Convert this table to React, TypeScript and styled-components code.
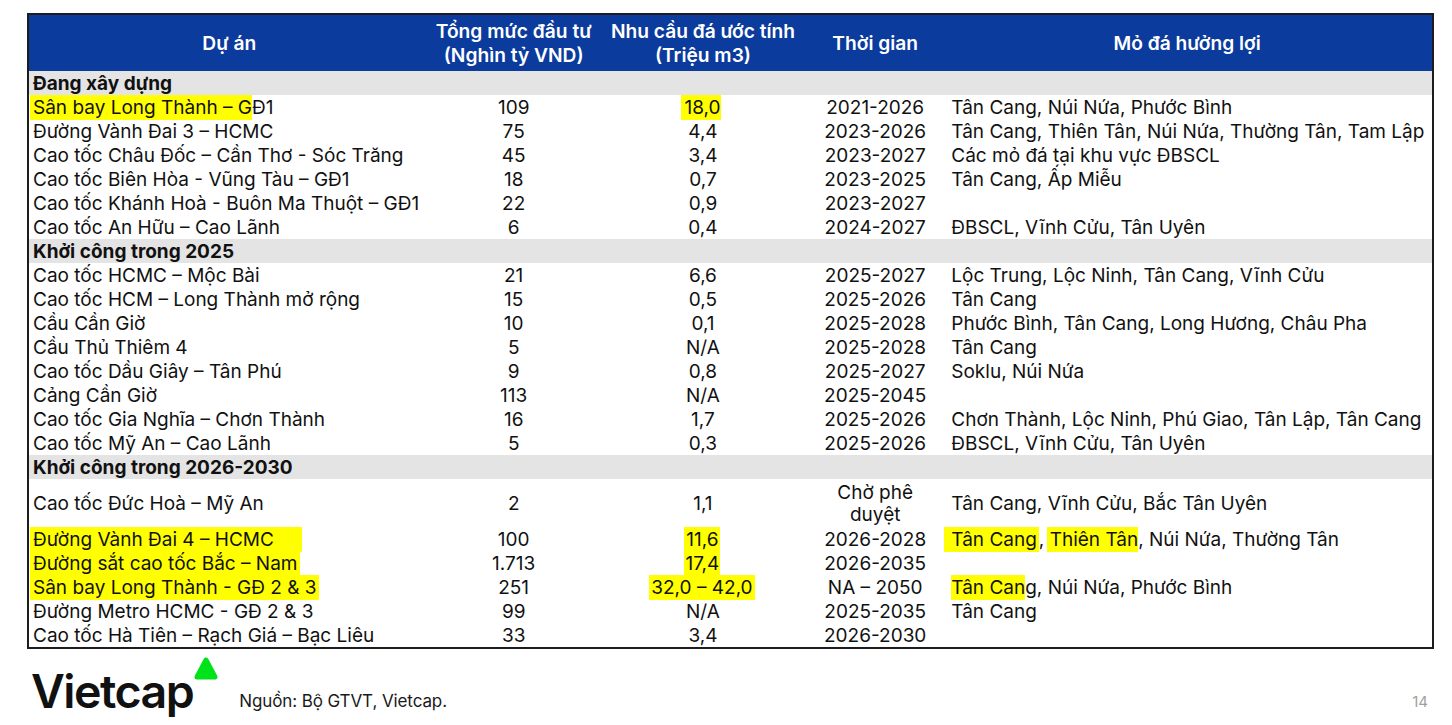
import React from "react";
import styled, {createGlobalStyle} from "styled-components";

const GlobalStyle = createGlobalStyle`
    html, body {
        margin: 0;
        padding: 0;
        background: #ffffff;
    }

    body {
        font-family: Inter, "Noto Sans", "Liberation Sans", sans-serif;
        color: #111111;
        overflow: hidden;
    }
`;

const Page = styled.div`
    width: 1452px;
    height: 725px;
    padding: 13px 0 0 27px;
    box-sizing: border-box;
    display: flex;
    flex-direction: column;
`;

const Table = styled.table`
    width: 1407px;
    table-layout: fixed;
    border-collapse: collapse;
    border: 2px solid #1c1c1c;
    font-size: 19px;
    letter-spacing: 0;
`;

const HeadCell = styled.th`
    height: 56px;
    padding: 0;
    background: #0a3b9d;
    color: #ffffff;
    font-weight: 600;
    font-size: 19.2px;
    line-height: 24px;
    text-align: center;
    vertical-align: middle;
`;

const SectionCell = styled.td`
    height: 22px;
    padding: 2px 0 0 4px;
    background: #e4e4e4;
    font-weight: 700;
    line-height: 22px;
    text-align: left;
`;

const Cell = styled.td<{ $align?: "left" | "center"; $pad?: number }>`
    height: 22px;
    padding: 2px 0 0 ${p => p.$pad ?? 0}px;
    line-height: 22px;
    white-space: nowrap;
    text-align: ${p => p.$align ?? "center"};
    vertical-align: middle;
`;

const Mark = styled.span<{ $extend?: number; $left?: number }>`
    background: #ffff00;
    padding: 1px ${p => p.$extend ?? 0}px 1px ${p => p.$left ?? 0}px;
    margin-left: ${p => -(p.$left ?? 0)}px;
`;

const Footer = styled.div`
    display: flex;
    align-items: flex-end;
    padding: 7px 0 0 4px;
    width: 1407px;
`;

const Logo = styled.div`
    display: flex;
    align-items: flex-start;
`;

const LogoText = styled.span`
    font-family: Inter, "Liberation Sans", sans-serif;
    font-weight: 600;
    font-size: 46.5px;
    letter-spacing: -1.5px;
    line-height: 56px;
    color: #111111;
    margin-top: 7px;
`;

const Source = styled.span`
    font-size: 17px;
    color: #1a1a1a;
    margin: 0 0 8px 20px;
    letter-spacing: -0.1px;
`;

const PageNumber = styled.span`
    margin: 0 0 8px auto;
    font-size: 15px;
    color: #a0a0a0;
    padding-right: 10px;
`;

type Row = {
    name: React.ReactNode;
    invest: string;
    demand: React.ReactNode;
    time: React.ReactNode;
    mines: React.ReactNode;
    tall?: boolean;
};

type Section = { title: string; rows: Row[] };

const sections: Section[] = [
    {
        title: "Đang xây dựng",
        rows: [
            {name: <><Mark $left={3}>Sân bay Long Thành – G</Mark>Đ1</>, invest: "109", demand: <Mark $left={3} $extend={1}>18,0</Mark>, time: "2021-2026", mines: "Tân Cang, Núi Nứa, Phước Bình"},
            {name: "Đường Vành Đai 3 – HCMC", invest: "75", demand: "4,4", time: "2023-2026", mines: "Tân Cang, Thiên Tân, Núi Nứa, Thường Tân, Tam Lập"},
            {name: "Cao tốc Châu Đốc – Cần Thơ - Sóc Trăng", invest: "45", demand: "3,4", time: "2023-2027", mines: "Các mỏ đá tại khu vực ĐBSCL"},
            {name: "Cao tốc Biên Hòa - Vũng Tàu – GĐ1", invest: "18", demand: "0,7", time: "2023-2025", mines: "Tân Cang, Ấp Miễu"},
            {name: "Cao tốc Khánh Hoà - Buôn Ma Thuột – GĐ1", invest: "22", demand: "0,9", time: "2023-2027", mines: ""},
            {name: "Cao tốc An Hữu – Cao Lãnh", invest: "6", demand: "0,4", time: "2024-2027", mines: "ĐBSCL, Vĩnh Cửu, Tân Uyên"},
        ],
    },
    {
        title: "Khởi công trong 2025",
        rows: [
            {name: "Cao tốc HCMC – Mộc Bài", invest: "21", demand: "6,6", time: "2025-2027", mines: "Lộc Trung, Lộc Ninh, Tân Cang, Vĩnh Cửu"},
            {name: "Cao tốc HCM – Long Thành mở rộng", invest: "15", demand: "0,5", time: "2025-2026", mines: "Tân Cang"},
            {name: "Cầu Cần Giờ", invest: "10", demand: "0,1", time: "2025-2028", mines: "Phước Bình, Tân Cang, Long Hương, Châu Pha"},
            {name: "Cầu Thủ Thiêm 4", invest: "5", demand: "N/A", time: "2025-2028", mines: "Tân Cang"},
            {name: "Cao tốc Dầu Giây – Tân Phú", invest: "9", demand: "0,8", time: "2025-2027", mines: "Soklu, Núi Nứa"},
            {name: "Cảng Cần Giờ", invest: "113", demand: "N/A", time: "2025-2045", mines: ""},
            {name: "Cao tốc Gia Nghĩa – Chơn Thành", invest: "16", demand: "1,7", time: "2025-2026", mines: "Chơn Thành, Lộc Ninh, Phú Giao, Tân Lập, Tân Cang"},
            {name: "Cao tốc Mỹ An – Cao Lãnh", invest: "5", demand: "0,3", time: "2025-2026", mines: "ĐBSCL, Vĩnh Cửu, Tân Uyên"},
        ],
    },
    {
        title: "Khởi công trong 2026-2030",
        rows: [
            {name: "Cao tốc Đức Hoà – Mỹ An", invest: "2", demand: "1,1", time: <>Chờ phê<br/>duyệt</>, mines: "Tân Cang, Vĩnh Cửu, Bắc Tân Uyên", tall: true},
            {name: <Mark $left={3} $extend={28}>Đường Vành Đai 4 – HCMC</Mark>, invest: "100", demand: <Mark $left={2} $extend={1}>11,6</Mark>, time: "2026-2028", mines: <><Mark $left={7} $extend={2}>Tân Cang</Mark>, <Mark $left={3}>Thiên Tân</Mark>, Núi Nứa, Thường Tân</>},
            {name: <Mark $left={3} $extend={2}>Đường sắt cao tốc Bắc – Nam</Mark>, invest: "1.713", demand: <Mark $left={2} $extend={1}>17,4</Mark>, time: "2026-2035", mines: ""},
            {name: <Mark $left={3} $extend={2}>Sân bay Long Thành - GĐ 2 &amp; 3</Mark>, invest: "251", demand: <Mark $left={2} $extend={2}>32,0 – 42,0</Mark>, time: "NA – 2050", mines: <><Mark>Tân Can</Mark>g, Núi Nứa, Phước Bình</>},
            {name: "Đường Metro HCMC - GĐ 2 & 3", invest: "99", demand: "N/A", time: "2025-2035", mines: "Tân Cang"},
            {name: "Cao tốc Hà Tiên – Rạch Giá – Bạc Liêu", invest: "33", demand: "3,4", time: "2026-2030", mines: ""},
        ],
    },
];

const VietcapTriangle = () => (
    <svg width="26" height="26" viewBox="0 0 26 26">
        <polygon points="13,4 22,21 4,21" fill="#00e31b" stroke="#00e31b" strokeWidth="5" strokeLinejoin="round"/>
    </svg>
);

const App = () => {
    return (
        <>
            <GlobalStyle/>
            <Page>
                <Table>
                    <colgroup>
                        <col style={{width: 401}}/>
                        <col style={{width: 168}}/>
                        <col style={{width: 210}}/>
                        <col style={{width: 134}}/>
                        <col style={{width: 490}}/>
                    </colgroup>
                    <thead>
                    <tr>
                        <HeadCell>Dự án</HeadCell>
                        <HeadCell>Tổng mức đầu tư<br/>(Nghìn tỷ VND)</HeadCell>
                        <HeadCell>Nhu cầu đá ước tính<br/>(Triệu m3)</HeadCell>
                        <HeadCell>Thời gian</HeadCell>
                        <HeadCell>Mỏ đá hưởng lợi</HeadCell>
                    </tr>
                    </thead>
                    <tbody>
                    {sections.map(section => (
                        <React.Fragment key={section.title}>
                            <tr>
                                <SectionCell colSpan={5}>{section.title}</SectionCell>
                            </tr>
                            {section.rows.map((row, i) => (
                                <tr key={i} style={row.tall ? {height: 48} : undefined}>
                                    <Cell $align="left" $pad={4}>{row.name}</Cell>
                                    <Cell>{row.invest}</Cell>
                                    <Cell>{row.demand}</Cell>
                                    <Cell>{row.time}</Cell>
                                    <Cell $align="left" $pad={9}>{row.mines}</Cell>
                                </tr>
                            ))}
                        </React.Fragment>
                    ))}
                    </tbody>
                </Table>
                <Footer>
                    <Logo>
                        <LogoText>Vietcap</LogoText>
                        <VietcapTriangle/>
                    </Logo>
                    <Source>Nguồn: Bộ GTVT, Vietcap.</Source>
                    <PageNumber>14</PageNumber>
                </Footer>
            </Page>
        </>
    );
};

export default App;
